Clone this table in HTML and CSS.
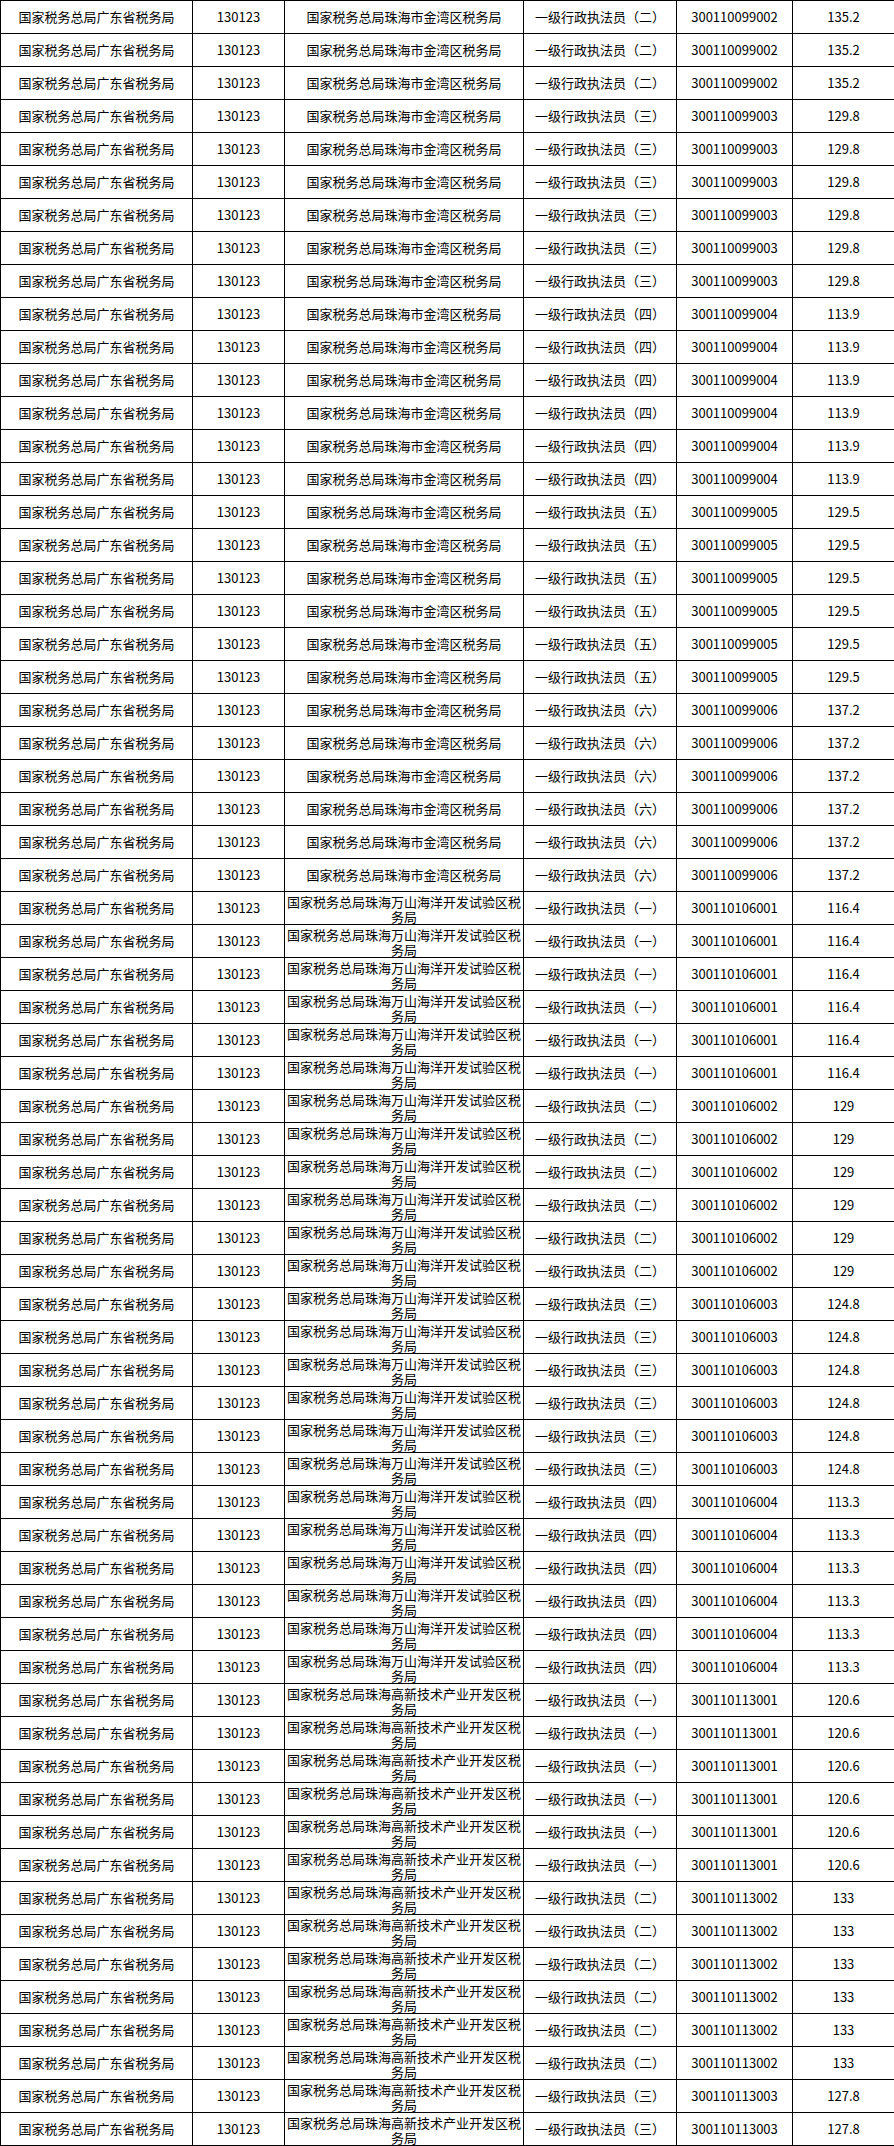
FILE: index.html
```html
<!DOCTYPE html>
<html lang="zh-CN">
<head>
<meta charset="utf-8">
<title>职位列表</title>
<link rel="stylesheet" href="styles.css">
</head>
<body>
<table class="grid">
<colgroup>
<col class="c1"><col class="c2"><col class="c3"><col class="c4"><col class="c5"><col class="c6">
</colgroup>
<tbody>
<tr><td>国家税务总局广东省税务局</td><td>130123</td><td>国家税务总局珠海市金湾区税务局</td><td>一级行政执法员（二）</td><td>300110099002</td><td>135.2</td></tr>
<tr><td>国家税务总局广东省税务局</td><td>130123</td><td>国家税务总局珠海市金湾区税务局</td><td>一级行政执法员（二）</td><td>300110099002</td><td>135.2</td></tr>
<tr><td>国家税务总局广东省税务局</td><td>130123</td><td>国家税务总局珠海市金湾区税务局</td><td>一级行政执法员（二）</td><td>300110099002</td><td>135.2</td></tr>
<tr><td>国家税务总局广东省税务局</td><td>130123</td><td>国家税务总局珠海市金湾区税务局</td><td>一级行政执法员（三）</td><td>300110099003</td><td>129.8</td></tr>
<tr><td>国家税务总局广东省税务局</td><td>130123</td><td>国家税务总局珠海市金湾区税务局</td><td>一级行政执法员（三）</td><td>300110099003</td><td>129.8</td></tr>
<tr><td>国家税务总局广东省税务局</td><td>130123</td><td>国家税务总局珠海市金湾区税务局</td><td>一级行政执法员（三）</td><td>300110099003</td><td>129.8</td></tr>
<tr><td>国家税务总局广东省税务局</td><td>130123</td><td>国家税务总局珠海市金湾区税务局</td><td>一级行政执法员（三）</td><td>300110099003</td><td>129.8</td></tr>
<tr><td>国家税务总局广东省税务局</td><td>130123</td><td>国家税务总局珠海市金湾区税务局</td><td>一级行政执法员（三）</td><td>300110099003</td><td>129.8</td></tr>
<tr><td>国家税务总局广东省税务局</td><td>130123</td><td>国家税务总局珠海市金湾区税务局</td><td>一级行政执法员（三）</td><td>300110099003</td><td>129.8</td></tr>
<tr><td>国家税务总局广东省税务局</td><td>130123</td><td>国家税务总局珠海市金湾区税务局</td><td>一级行政执法员（四）</td><td>300110099004</td><td>113.9</td></tr>
<tr><td>国家税务总局广东省税务局</td><td>130123</td><td>国家税务总局珠海市金湾区税务局</td><td>一级行政执法员（四）</td><td>300110099004</td><td>113.9</td></tr>
<tr><td>国家税务总局广东省税务局</td><td>130123</td><td>国家税务总局珠海市金湾区税务局</td><td>一级行政执法员（四）</td><td>300110099004</td><td>113.9</td></tr>
<tr><td>国家税务总局广东省税务局</td><td>130123</td><td>国家税务总局珠海市金湾区税务局</td><td>一级行政执法员（四）</td><td>300110099004</td><td>113.9</td></tr>
<tr><td>国家税务总局广东省税务局</td><td>130123</td><td>国家税务总局珠海市金湾区税务局</td><td>一级行政执法员（四）</td><td>300110099004</td><td>113.9</td></tr>
<tr><td>国家税务总局广东省税务局</td><td>130123</td><td>国家税务总局珠海市金湾区税务局</td><td>一级行政执法员（四）</td><td>300110099004</td><td>113.9</td></tr>
<tr><td>国家税务总局广东省税务局</td><td>130123</td><td>国家税务总局珠海市金湾区税务局</td><td>一级行政执法员（五）</td><td>300110099005</td><td>129.5</td></tr>
<tr><td>国家税务总局广东省税务局</td><td>130123</td><td>国家税务总局珠海市金湾区税务局</td><td>一级行政执法员（五）</td><td>300110099005</td><td>129.5</td></tr>
<tr><td>国家税务总局广东省税务局</td><td>130123</td><td>国家税务总局珠海市金湾区税务局</td><td>一级行政执法员（五）</td><td>300110099005</td><td>129.5</td></tr>
<tr><td>国家税务总局广东省税务局</td><td>130123</td><td>国家税务总局珠海市金湾区税务局</td><td>一级行政执法员（五）</td><td>300110099005</td><td>129.5</td></tr>
<tr><td>国家税务总局广东省税务局</td><td>130123</td><td>国家税务总局珠海市金湾区税务局</td><td>一级行政执法员（五）</td><td>300110099005</td><td>129.5</td></tr>
<tr><td>国家税务总局广东省税务局</td><td>130123</td><td>国家税务总局珠海市金湾区税务局</td><td>一级行政执法员（五）</td><td>300110099005</td><td>129.5</td></tr>
<tr><td>国家税务总局广东省税务局</td><td>130123</td><td>国家税务总局珠海市金湾区税务局</td><td>一级行政执法员（六）</td><td>300110099006</td><td>137.2</td></tr>
<tr><td>国家税务总局广东省税务局</td><td>130123</td><td>国家税务总局珠海市金湾区税务局</td><td>一级行政执法员（六）</td><td>300110099006</td><td>137.2</td></tr>
<tr><td>国家税务总局广东省税务局</td><td>130123</td><td>国家税务总局珠海市金湾区税务局</td><td>一级行政执法员（六）</td><td>300110099006</td><td>137.2</td></tr>
<tr><td>国家税务总局广东省税务局</td><td>130123</td><td>国家税务总局珠海市金湾区税务局</td><td>一级行政执法员（六）</td><td>300110099006</td><td>137.2</td></tr>
<tr><td>国家税务总局广东省税务局</td><td>130123</td><td>国家税务总局珠海市金湾区税务局</td><td>一级行政执法员（六）</td><td>300110099006</td><td>137.2</td></tr>
<tr><td>国家税务总局广东省税务局</td><td>130123</td><td>国家税务总局珠海市金湾区税务局</td><td>一级行政执法员（六）</td><td>300110099006</td><td>137.2</td></tr>
<tr><td>国家税务总局广东省税务局</td><td>130123</td><td class="wrap"><div class="two">国家税务总局珠海万山海洋开发试验区税务局</div></td><td>一级行政执法员（一）</td><td>300110106001</td><td>116.4</td></tr>
<tr><td>国家税务总局广东省税务局</td><td>130123</td><td class="wrap"><div class="two">国家税务总局珠海万山海洋开发试验区税务局</div></td><td>一级行政执法员（一）</td><td>300110106001</td><td>116.4</td></tr>
<tr><td>国家税务总局广东省税务局</td><td>130123</td><td class="wrap"><div class="two">国家税务总局珠海万山海洋开发试验区税务局</div></td><td>一级行政执法员（一）</td><td>300110106001</td><td>116.4</td></tr>
<tr><td>国家税务总局广东省税务局</td><td>130123</td><td class="wrap"><div class="two">国家税务总局珠海万山海洋开发试验区税务局</div></td><td>一级行政执法员（一）</td><td>300110106001</td><td>116.4</td></tr>
<tr><td>国家税务总局广东省税务局</td><td>130123</td><td class="wrap"><div class="two">国家税务总局珠海万山海洋开发试验区税务局</div></td><td>一级行政执法员（一）</td><td>300110106001</td><td>116.4</td></tr>
<tr><td>国家税务总局广东省税务局</td><td>130123</td><td class="wrap"><div class="two">国家税务总局珠海万山海洋开发试验区税务局</div></td><td>一级行政执法员（一）</td><td>300110106001</td><td>116.4</td></tr>
<tr><td>国家税务总局广东省税务局</td><td>130123</td><td class="wrap"><div class="two">国家税务总局珠海万山海洋开发试验区税务局</div></td><td>一级行政执法员（二）</td><td>300110106002</td><td>129</td></tr>
<tr><td>国家税务总局广东省税务局</td><td>130123</td><td class="wrap"><div class="two">国家税务总局珠海万山海洋开发试验区税务局</div></td><td>一级行政执法员（二）</td><td>300110106002</td><td>129</td></tr>
<tr><td>国家税务总局广东省税务局</td><td>130123</td><td class="wrap"><div class="two">国家税务总局珠海万山海洋开发试验区税务局</div></td><td>一级行政执法员（二）</td><td>300110106002</td><td>129</td></tr>
<tr><td>国家税务总局广东省税务局</td><td>130123</td><td class="wrap"><div class="two">国家税务总局珠海万山海洋开发试验区税务局</div></td><td>一级行政执法员（二）</td><td>300110106002</td><td>129</td></tr>
<tr><td>国家税务总局广东省税务局</td><td>130123</td><td class="wrap"><div class="two">国家税务总局珠海万山海洋开发试验区税务局</div></td><td>一级行政执法员（二）</td><td>300110106002</td><td>129</td></tr>
<tr><td>国家税务总局广东省税务局</td><td>130123</td><td class="wrap"><div class="two">国家税务总局珠海万山海洋开发试验区税务局</div></td><td>一级行政执法员（二）</td><td>300110106002</td><td>129</td></tr>
<tr><td>国家税务总局广东省税务局</td><td>130123</td><td class="wrap"><div class="two">国家税务总局珠海万山海洋开发试验区税务局</div></td><td>一级行政执法员（三）</td><td>300110106003</td><td>124.8</td></tr>
<tr><td>国家税务总局广东省税务局</td><td>130123</td><td class="wrap"><div class="two">国家税务总局珠海万山海洋开发试验区税务局</div></td><td>一级行政执法员（三）</td><td>300110106003</td><td>124.8</td></tr>
<tr><td>国家税务总局广东省税务局</td><td>130123</td><td class="wrap"><div class="two">国家税务总局珠海万山海洋开发试验区税务局</div></td><td>一级行政执法员（三）</td><td>300110106003</td><td>124.8</td></tr>
<tr><td>国家税务总局广东省税务局</td><td>130123</td><td class="wrap"><div class="two">国家税务总局珠海万山海洋开发试验区税务局</div></td><td>一级行政执法员（三）</td><td>300110106003</td><td>124.8</td></tr>
<tr><td>国家税务总局广东省税务局</td><td>130123</td><td class="wrap"><div class="two">国家税务总局珠海万山海洋开发试验区税务局</div></td><td>一级行政执法员（三）</td><td>300110106003</td><td>124.8</td></tr>
<tr><td>国家税务总局广东省税务局</td><td>130123</td><td class="wrap"><div class="two">国家税务总局珠海万山海洋开发试验区税务局</div></td><td>一级行政执法员（三）</td><td>300110106003</td><td>124.8</td></tr>
<tr><td>国家税务总局广东省税务局</td><td>130123</td><td class="wrap"><div class="two">国家税务总局珠海万山海洋开发试验区税务局</div></td><td>一级行政执法员（四）</td><td>300110106004</td><td>113.3</td></tr>
<tr><td>国家税务总局广东省税务局</td><td>130123</td><td class="wrap"><div class="two">国家税务总局珠海万山海洋开发试验区税务局</div></td><td>一级行政执法员（四）</td><td>300110106004</td><td>113.3</td></tr>
<tr><td>国家税务总局广东省税务局</td><td>130123</td><td class="wrap"><div class="two">国家税务总局珠海万山海洋开发试验区税务局</div></td><td>一级行政执法员（四）</td><td>300110106004</td><td>113.3</td></tr>
<tr><td>国家税务总局广东省税务局</td><td>130123</td><td class="wrap"><div class="two">国家税务总局珠海万山海洋开发试验区税务局</div></td><td>一级行政执法员（四）</td><td>300110106004</td><td>113.3</td></tr>
<tr><td>国家税务总局广东省税务局</td><td>130123</td><td class="wrap"><div class="two">国家税务总局珠海万山海洋开发试验区税务局</div></td><td>一级行政执法员（四）</td><td>300110106004</td><td>113.3</td></tr>
<tr><td>国家税务总局广东省税务局</td><td>130123</td><td class="wrap"><div class="two">国家税务总局珠海万山海洋开发试验区税务局</div></td><td>一级行政执法员（四）</td><td>300110106004</td><td>113.3</td></tr>
<tr><td>国家税务总局广东省税务局</td><td>130123</td><td class="wrap"><div class="two">国家税务总局珠海高新技术产业开发区税务局</div></td><td>一级行政执法员（一）</td><td>300110113001</td><td>120.6</td></tr>
<tr><td>国家税务总局广东省税务局</td><td>130123</td><td class="wrap"><div class="two">国家税务总局珠海高新技术产业开发区税务局</div></td><td>一级行政执法员（一）</td><td>300110113001</td><td>120.6</td></tr>
<tr><td>国家税务总局广东省税务局</td><td>130123</td><td class="wrap"><div class="two">国家税务总局珠海高新技术产业开发区税务局</div></td><td>一级行政执法员（一）</td><td>300110113001</td><td>120.6</td></tr>
<tr><td>国家税务总局广东省税务局</td><td>130123</td><td class="wrap"><div class="two">国家税务总局珠海高新技术产业开发区税务局</div></td><td>一级行政执法员（一）</td><td>300110113001</td><td>120.6</td></tr>
<tr><td>国家税务总局广东省税务局</td><td>130123</td><td class="wrap"><div class="two">国家税务总局珠海高新技术产业开发区税务局</div></td><td>一级行政执法员（一）</td><td>300110113001</td><td>120.6</td></tr>
<tr><td>国家税务总局广东省税务局</td><td>130123</td><td class="wrap"><div class="two">国家税务总局珠海高新技术产业开发区税务局</div></td><td>一级行政执法员（一）</td><td>300110113001</td><td>120.6</td></tr>
<tr><td>国家税务总局广东省税务局</td><td>130123</td><td class="wrap"><div class="two">国家税务总局珠海高新技术产业开发区税务局</div></td><td>一级行政执法员（二）</td><td>300110113002</td><td>133</td></tr>
<tr><td>国家税务总局广东省税务局</td><td>130123</td><td class="wrap"><div class="two">国家税务总局珠海高新技术产业开发区税务局</div></td><td>一级行政执法员（二）</td><td>300110113002</td><td>133</td></tr>
<tr><td>国家税务总局广东省税务局</td><td>130123</td><td class="wrap"><div class="two">国家税务总局珠海高新技术产业开发区税务局</div></td><td>一级行政执法员（二）</td><td>300110113002</td><td>133</td></tr>
<tr><td>国家税务总局广东省税务局</td><td>130123</td><td class="wrap"><div class="two">国家税务总局珠海高新技术产业开发区税务局</div></td><td>一级行政执法员（二）</td><td>300110113002</td><td>133</td></tr>
<tr><td>国家税务总局广东省税务局</td><td>130123</td><td class="wrap"><div class="two">国家税务总局珠海高新技术产业开发区税务局</div></td><td>一级行政执法员（二）</td><td>300110113002</td><td>133</td></tr>
<tr><td>国家税务总局广东省税务局</td><td>130123</td><td class="wrap"><div class="two">国家税务总局珠海高新技术产业开发区税务局</div></td><td>一级行政执法员（二）</td><td>300110113002</td><td>133</td></tr>
<tr><td>国家税务总局广东省税务局</td><td>130123</td><td class="wrap"><div class="two">国家税务总局珠海高新技术产业开发区税务局</div></td><td>一级行政执法员（三）</td><td>300110113003</td><td>127.8</td></tr>
<tr><td>国家税务总局广东省税务局</td><td>130123</td><td class="wrap"><div class="two">国家税务总局珠海高新技术产业开发区税务局</div></td><td>一级行政执法员（三）</td><td>300110113003</td><td>127.8</td></tr>
</tbody>
</table>
</body>
</html>
```

FILE: styles.css
```css
html, body {
  margin: 0;
  padding: 0;
  background: #ffffff;
}

body {
  font-family: "Noto Sans CJK SC", sans-serif;
  font-size: 13px;
  color: #000000;
}

.grid {
  border-collapse: collapse;
  table-layout: fixed;
  width: 894px;
}

.grid .c1 { width: 192px; }
.grid .c2 { width: 92px; }
.grid .c3 { width: 239px; }
.grid .c4 { width: 153px; }
.grid .c5 { width: 116px; }
.grid .c6 { width: 102px; }

.grid td {
  border: 1px solid #000000;
  height: 32px;
  padding: 0 1px;
  text-align: center;
  vertical-align: middle;
  line-height: 16px;
  white-space: nowrap;
  overflow: hidden;
}

.grid td.wrap {
  white-space: normal;
  padding: 0;
  line-height: 0;
}

.grid .two {
  display: block;
  height: 30px;
  line-height: 15px;
  margin-top: 1px;
  font-size: 13px;
}
```
